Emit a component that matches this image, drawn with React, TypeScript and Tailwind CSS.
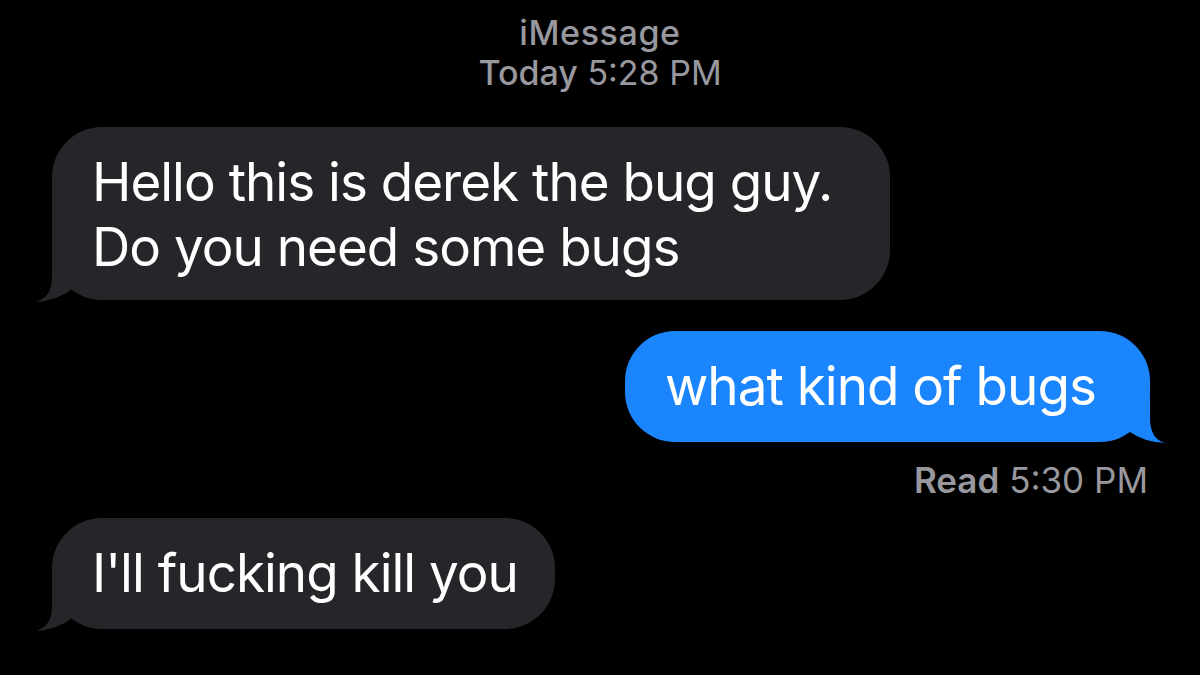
import React from 'react';

const font = { fontFamily: 'Inter, "Liberation Sans", sans-serif' };

const ReceivedTail: React.FC = () => (
  <svg className="absolute left-[-17px] bottom-[-2px]" width="40" height="50" viewBox="0 0 40 50">
    <path d="M17 3 L17 25 Q17 46 0 50 Q22 49 37 37 L37 3 Z" fill="#262529" />
  </svg>
);

const SentTail: React.FC = () => (
  <svg className="absolute right-[-15px] bottom-[-1px]" width="40" height="50" viewBox="0 0 40 50">
    <path d="M25 3 L25 25 Q25 46 40 50 Q19 49 5 39 L5 3 Z" fill="#1a85fd" />
  </svg>
);

export default function App() {
  return (
    <div className="w-[1200px] h-[675px] bg-black overflow-hidden flex flex-col" style={font}>
      {/* Conversation header */}
      <div className="flex flex-col items-center pt-[13px] text-[34px] leading-[40px] text-[#98989e]">
        <span className="font-medium tracking-[0.6px]">iMessage</span>
        <span>
          <span className="font-medium">Today</span> 5:28 PM
        </span>
      </div>

      {/* Incoming */}
      <div className="mt-[34px] pl-[52px]">
        <div className="relative w-[838px] rounded-[50px] bg-[#262529] pl-[40px] pt-[23px] pb-[20px] text-white text-[53px] leading-[65px] tracking-[-1px]">
          <p>Hello this is derek the bug guy.</p>
          <p>Do you need some bugs</p>
          <ReceivedTail />
        </div>
      </div>

      {/* Outgoing */}
      <div className="mt-[31px] flex flex-col items-end pr-[50px]">
        <div className="relative w-[525px] rounded-[50px] bg-[#1a85fd] pl-[40px] py-[23px] text-white text-[53px] leading-[65px] tracking-[-1px]">
          <p>what kind of bugs</p>
          <SentTail />
        </div>
        <div className="mt-[18px] pr-[2px] text-[35px] leading-[40px] text-[#98989e]">
          <span className="font-semibold">Read</span> 5:30 PM
        </div>
      </div>

      {/* Incoming */}
      <div className="mt-[18px] pl-[52px]">
        <div className="relative w-[503px] rounded-[50px] bg-[#262529] pl-[40px] py-[23px] text-white text-[53px] leading-[65px] tracking-[-1px]">
          <p>I'll fucking kill you</p>
          <ReceivedTail />
        </div>
      </div>
    </div>
  );
}
